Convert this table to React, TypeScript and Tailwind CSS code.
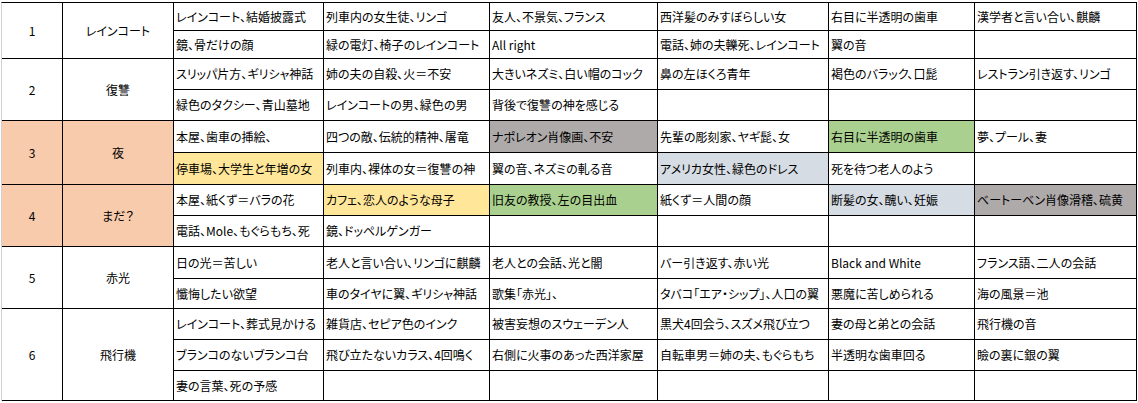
type Fill = "" | "yellow" | "gray" | "green" | "blue";

type Cell = { text: string; fill?: Fill };

type Group = {
  no: string;
  label: string;
  peach?: boolean;
  rows: Cell[][];
};

const groups: Group[] = [
  {
    no: "1",
    label: "レインコート",
    rows: [
      [
        { text: "レインコート、結婚披露式" },
        { text: "列車内の女生徒、リンゴ" },
        { text: "友人、不景気、フランス" },
        { text: "西洋髪のみすぼらしい女" },
        { text: "右目に半透明の歯車" },
        { text: "漢学者と言い合い、麒麟" },
      ],
      [
        { text: "鏡、骨だけの顔" },
        { text: "緑の電灯、椅子のレインコート" },
        { text: "All right" },
        { text: "電話、姉の夫轢死、レインコート" },
        { text: "翼の音" },
        { text: "" },
      ],
    ],
  },
  {
    no: "2",
    label: "復讐",
    rows: [
      [
        { text: "スリッパ片方、ギリシャ神話" },
        { text: "姉の夫の自殺、火＝不安" },
        { text: "大きいネズミ、白い帽のコック" },
        { text: "鼻の左ほくろ青年" },
        { text: "褐色のバラック、口髭" },
        { text: "レストラン引き返す、リンゴ" },
      ],
      [
        { text: "緑色のタクシー、青山墓地" },
        { text: "レインコートの男、緑色の男" },
        { text: "背後で復讐の神を感じる" },
        { text: "" },
        { text: "" },
        { text: "" },
      ],
    ],
  },
  {
    no: "3",
    label: "夜",
    peach: true,
    rows: [
      [
        { text: "本屋、歯車の挿絵、" },
        { text: "四つの敵、伝統的精神、屠竜" },
        { text: "ナポレオン肖像画、不安", fill: "gray" },
        { text: "先輩の彫刻家、ヤギ髭、女" },
        { text: "右目に半透明の歯車", fill: "green" },
        { text: "夢、プール、妻" },
      ],
      [
        { text: "停車場、大学生と年増の女", fill: "yellow" },
        { text: "列車内、裸体の女＝復讐の神" },
        { text: "翼の音、ネズミの軋る音" },
        { text: "アメリカ女性、緑色のドレス", fill: "blue" },
        { text: "死を待つ老人のよう" },
        { text: "" },
      ],
    ],
  },
  {
    no: "4",
    label: "まだ？",
    peach: true,
    rows: [
      [
        { text: "本屋、紙くず＝バラの花" },
        { text: "カフェ、恋人のような母子", fill: "yellow" },
        { text: "旧友の教授、左の目出血", fill: "green" },
        { text: "紙くず＝人間の顔" },
        { text: "断髪の女、醜い、妊娠", fill: "blue" },
        { text: "ベートーベン肖像滑稽、硫黄", fill: "gray" },
      ],
      [
        { text: "電話、Mole、もぐらもち、死" },
        { text: "鏡、ドッペルゲンガー" },
        { text: "" },
        { text: "" },
        { text: "" },
        { text: "" },
      ],
    ],
  },
  {
    no: "5",
    label: "赤光",
    rows: [
      [
        { text: "日の光＝苦しい" },
        { text: "老人と言い合い、リンゴに麒麟" },
        { text: "老人との会話、光と闇" },
        { text: "バー引き返す、赤い光" },
        { text: "Black and White" },
        { text: "フランス語、二人の会話" },
      ],
      [
        { text: "懺悔したい欲望" },
        { text: "車のタイヤに翼、ギリシャ神話" },
        { text: "歌集「赤光」、" },
        { text: "タバコ「エア・シップ」、人口の翼" },
        { text: "悪魔に苦しめられる" },
        { text: "海の風景＝池" },
      ],
    ],
  },
  {
    no: "6",
    label: "飛行機",
    rows: [
      [
        { text: "レインコート、葬式見かける" },
        { text: "雑貨店、セピア色のインク" },
        { text: "被害妄想のスウェーデン人" },
        { text: "黒犬4回会う、スズメ飛び立つ" },
        { text: "妻の母と弟との会話" },
        { text: "飛行機の音" },
      ],
      [
        { text: "ブランコのないブランコ台" },
        { text: "飛び立たないカラス、4回鳴く" },
        { text: "右側に火事のあった西洋家屋" },
        { text: "自転車男＝姉の夫、もぐらもち" },
        { text: "半透明な歯車回る" },
        { text: "瞼の裏に銀の翼" },
      ],
      [
        { text: "妻の言葉、死の予感" },
        { text: "" },
        { text: "" },
        { text: "" },
        { text: "" },
        { text: "" },
      ],
    ],
  },
];

const fillClass: Record<string, string> = {
  "": "bg-white",
  yellow: "bg-[#ffe699]",
  gray: "bg-[#aeaaaa]",
  green: "bg-[#a9d08e]",
  blue: "bg-[#d6dce4]",
};

const spanClass: Record<number, string> = {
  2: "row-span-2",
  3: "row-span-3",
};

export default function App() {
  return (
    <div className="w-[1138px] h-[403px] bg-white pt-[2px] pl-[1px] overflow-hidden font-['Noto_Sans_CJK_JP','Noto_Sans',sans-serif] text-[12px] leading-none text-black [font-feature-settings:'palt']">
      <div className="grid grid-cols-[61px_111px_150px_166px_168px_171px_146px_162px] grid-rows-[28px_28px_31px_31px_32px_32px_31px_31px_32px_30px_31px_31px_30px] w-fit border-t border-l border-t-black border-l-[#d0d0d0]">
        {groups.map((g) => {
          const span = spanClass[g.rows.length];
          const head = g.peach ? "bg-[#f8cbad]" : "bg-white";
          return [
            <div
              key={g.no + "n"}
              className={`${span} ${head} border-r border-b border-black flex items-center justify-center`}
            >
              {g.no}
            </div>,
            <div
              key={g.no + "l"}
              className={`${span} ${head} border-r border-b border-black flex items-center justify-center`}
            >
              {g.label}
            </div>,
            ...g.rows.flatMap((row, ri) =>
              row.map((c, ci) => (
                <div
                  key={`${g.no}-${ri}-${ci}`}
                  className={`${fillClass[c.fill ?? ""]} border-r border-b border-black flex items-center pl-[2px] whitespace-nowrap overflow-hidden`}
                >
                  {c.text}
                </div>
              ))
            ),
          ];
        })}
      </div>
    </div>
  );
}
